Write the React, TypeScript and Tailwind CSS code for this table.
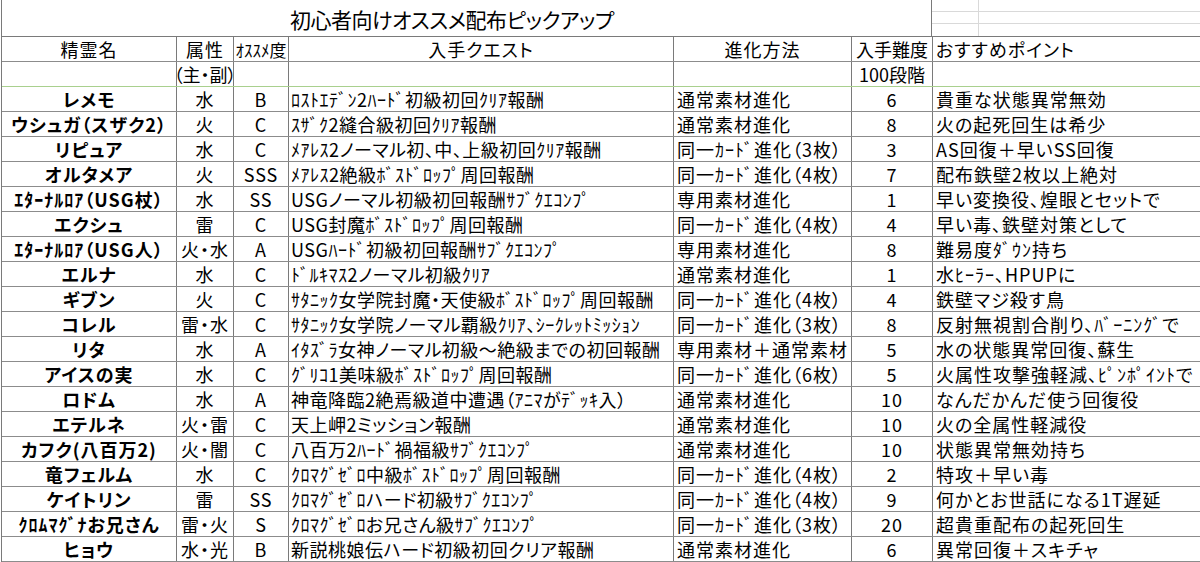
import React from 'react'

// 精霊名, 属性, オススメ度, 入手クエスト, 進化方法, 入手難度, おすすめポイント
const rows: string[][] = [
  ['レメモ', '水', 'B', 'ﾛｽﾄｴﾃﾞﾝ2ﾊｰﾄﾞ初級初回ｸﾘｱ報酬', '通常素材進化', '6', '貴重な状態異常無効'],
  ['ウシュガ（スザク2）', '火', 'C', 'ｽｻﾞｸ2縫合級初回ｸﾘｱ報酬', '通常素材進化', '8', '火の起死回生は希少'],
  ['リピュア', '水', 'C', 'ﾒｱﾚｽ2ノーマル初、中、上級初回ｸﾘｱ報酬', '同一ｶｰﾄﾞ進化（3枚）', '3', 'AS回復＋早いSS回復'],
  ['オルタメア', '火', 'SSS', 'ﾒｱﾚｽ2絶級ﾎﾞｽﾄﾞﾛｯﾌﾟ周回報酬', '同一ｶｰﾄﾞ進化（4枚）', '7', '配布鉄壁2枚以上絶対'],
  ['ｴﾀｰﾅﾙﾛｱ（USG杖）', '水', 'SS', 'USGノーマル初級初回報酬ｻﾌﾞｸｴｺﾝﾌﾟ', '専用素材進化', '1', '早い変換役、煌眼とセットで'],
  ['エクシュ', '雷', 'C', 'USG封魔ﾎﾞｽﾄﾞﾛｯﾌﾟ周回報酬', '同一ｶｰﾄﾞ進化（4枚）', '4', '早い毒、鉄壁対策として'],
  ['ｴﾀｰﾅﾙﾛｱ（USG人）', '火・水', 'A', 'USGﾊｰﾄﾞ初級初回報酬ｻﾌﾞｸｴｺﾝﾌﾟ', '専用素材進化', '8', '難易度ﾀﾞｳﾝ持ち'],
  ['エルナ', '水', 'C', 'ﾄﾞﾙｷﾏｽ2ノーマル初級ｸﾘｱ', '通常素材進化', '1', '水ﾋｰﾗｰ、HPUPに'],
  ['ギブン', '火', 'C', 'ｻﾀﾆｯｸ女学院封魔・天使級ﾎﾞｽﾄﾞﾛｯﾌﾟ周回報酬', '同一ｶｰﾄﾞ進化（4枚）', '4', '鉄壁マジ殺す鳥'],
  ['コレル', '雷・水', 'C', 'ｻﾀﾆｯｸ女学院ノーマル覇級ｸﾘｱ、ｼｰｸﾚｯﾄﾐｯｼｮﾝ', '同一ｶｰﾄﾞ進化（3枚）', '8', '反射無視割合削り、ﾊﾞｰﾆﾝｸﾞで'],
  ['リタ', '水', 'A', 'ｲﾀｽﾞﾗ女神ノーマル初級～絶級までの初回報酬', '専用素材＋通常素材', '5', '水の状態異常回復、蘇生'],
  ['アイスの実', '水', 'C', 'ｸﾞﾘｺ1美味級ﾎﾞｽﾄﾞﾛｯﾌﾟ周回報酬', '同一ｶｰﾄﾞ進化（6枚）', '5', '火属性攻撃強軽減、ﾋﾟﾝﾎﾟｲﾝﾄで'],
  ['ロドム', '水', 'A', '神竜降臨2絶焉級道中遭遇（ｱﾆﾏがﾃﾞｯｷ入）', '通常素材進化', '10', 'なんだかんだ使う回復役'],
  ['エテルネ', '火・雷', 'C', '天上岬2ミッション報酬', '通常素材進化', '10', '火の全属性軽減役'],
  ['カフク(八百万2)', '火・闇', 'C', '八百万2ﾊｰﾄﾞ禍福級ｻﾌﾞｸｴｺﾝﾌﾟ', '通常素材進化', '10', '状態異常無効持ち'],
  ['竜フェルム', '水', 'C', 'ｸﾛﾏｸﾞｾﾞﾛ中級ﾎﾞｽﾄﾞﾛｯﾌﾟ周回報酬', '同一ｶｰﾄﾞ進化（4枚）', '2', '特攻＋早い毒'],
  ['ケイトリン', '雷', 'SS', 'ｸﾛﾏｸﾞｾﾞﾛハード初級ｻﾌﾞｸｴｺﾝﾌﾟ', '同一ｶｰﾄﾞ進化（4枚）', '9', '何かとお世話になる1T遅延'],
  ['ｸﾛﾑﾏｸﾞﾅお兄さん', '雷・火', 'S', 'ｸﾛﾏｸﾞｾﾞﾛお兄さん級ｻﾌﾞｸｴｺﾝﾌﾟ', '同一ｶｰﾄﾞ進化（3枚）', '20', '超貴重配布の起死回生'],
  ['ヒョウ', '水・光', 'B', '新説桃娘伝ハード初級初回クリア報酬', '通常素材進化', '6', '異常回復＋スキチャ'],
]

const cellAlign = [
  'justify-center font-bold',
  'justify-center',
  'justify-center',
  'justify-start pl-[2px] tracking-[0.5px]',
  'justify-start pl-[3px]',
  'justify-center',
  'justify-start pl-[3px]',
]

function Cell({ children, className = '', last = false }: { children?: React.ReactNode; className?: string; last?: boolean }) {
  return (
    <div
      className={`flex items-center whitespace-nowrap overflow-visible leading-none ${last ? '' : 'border-r border-[#7a7a7a]'} ${className}`}
    >
      {children}
    </div>
  )
}

const grid = 'grid grid-cols-[175px_57px_55px_385px_178px_81px_1fr]'

export default function App() {
  return (
    <div className="w-[1200px] h-[562px] overflow-hidden bg-white text-black font-['Noto_Sans_CJK_JP',sans-serif] [font-feature-settings:'palt']">
      <div className="border-l border-[#7a7a7a] ml-px">
        {/* title row */}
        <div className="grid grid-cols-[930px_1fr] h-[37px] border-b border-[#7a7a7a]">
          <div className="border-r border-[#7a7a7a] flex items-end pl-[288px] pb-[6px] text-[21px] tracking-[-0.5px] leading-none whitespace-nowrap">
            初心者向けオススメ配布ピックアップ
          </div>
          <div className="flex flex-col">
            {[0, 1, 2].map((i) => (
              <div key={i} className={`h-[12px] grid grid-cols-[47px_1fr] ${i < 2 ? 'border-b border-[#d9d9d9]' : ''}`}>
                <div className="border-r border-[#d9d9d9]" />
              </div>
            ))}
          </div>
        </div>

        {/* header */}
        <div className={`${grid} h-[25px] border-b border-[#8c8c8c] text-[18px] tracking-[1px]`}>
          <Cell className="justify-center">精霊名</Cell>
          <Cell className="justify-center">属性</Cell>
          <Cell className="justify-center tracking-normal text-[17px]">ｵｽｽﾒ度</Cell>
          <Cell className="justify-center">入手クエスト</Cell>
          <Cell className="justify-center">進化方法</Cell>
          <Cell className="justify-center tracking-normal">入手難度</Cell>
          <Cell className="justify-start pl-[3px]" last>おすすめポイント</Cell>
        </div>
        <div className={`${grid} h-[25px] border-b border-[#a9d08e] text-[18px] tracking-[1px]`}>
          <Cell />
          <Cell className="justify-center tracking-normal">（主・副）</Cell>
          <Cell />
          <Cell />
          <Cell />
          <Cell className="justify-center tracking-normal">100段階</Cell>
          <Cell last />
        </div>

        {rows.map((r, i) => (
          <div key={i} className={`${grid} h-[25px] border-b border-[#8c8c8c] text-[18px] tracking-[1px]`}>
            {r.map((v, j) => (
              <Cell key={j} className={cellAlign[j]} last={j === 6}>
                {v}
              </Cell>
            ))}
          </div>
        ))}
      </div>
    </div>
  )
}
